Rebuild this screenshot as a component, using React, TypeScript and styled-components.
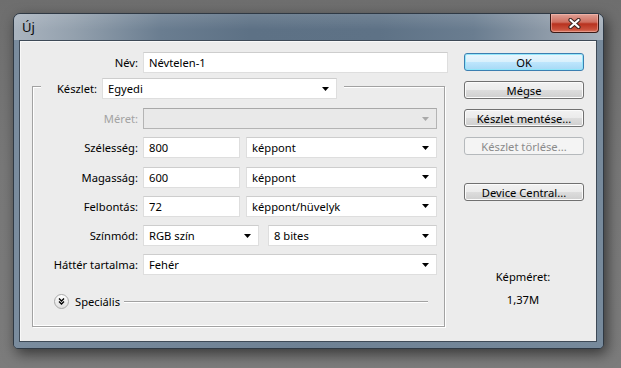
import styled, { createGlobalStyle } from "styled-components"

const GlobalStyle = createGlobalStyle`
    html, body { margin: 0; padding: 0; }
    body { font-family: "Noto Sans", "DejaVu Sans", sans-serif; }
`

interface WidthProps {
    $w?: number;
    $disabled?: boolean;
}

const Desktop = styled.div`
    width: 621px;
    height: 368px;
    box-sizing: border-box;
    padding: 13px 0 0 13px;
    overflow: hidden;
    background: linear-gradient(180deg, #6e6e6e 0%, #787878 45%, #7c7c7c 100%);
`

const Window = styled.div`
    width: 591px;
    height: 336px;
    box-sizing: border-box;
    border: 1px solid #2f3944;
    border-radius: 7px 7px 5px 5px;
    background-color: #6f8295;
    box-shadow: 3px 5px 14px rgba(0, 0, 0, 0.55);
    display: flex;
    flex-direction: column;
    overflow: hidden;
`

const TitleBar = styled.div`
    height: 26px;
    flex: none;
    display: flex;
    justify-content: space-between;
    align-items: flex-start;
    padding: 0 4px 0 8px;
    background:
        linear-gradient(180deg, rgba(255, 255, 255, 0.12) 0%, rgba(255, 255, 255, 0) 60%),
        linear-gradient(90deg, #aab4bf 0%, #94a1ae 10%, #6a7d90 25%, #5d7185 40%, #5e7286 62%, #6a7d90 78%, #8c99a7 90%, #a7b1bc 100%);
`

const Title = styled.span`
    margin-top: 4px;
    font-size: 13px;
    line-height: 18px;
    color: #0a0a0a;
`

const CloseButton = styled.div`
    width: 49px;
    height: 19px;
    box-sizing: border-box;
    border: 1px solid #3a1a16;
    border-top: none;
    border-radius: 0 0 4px 4px;
    background: linear-gradient(180deg, #e0a196 0%, #cf6f60 45%, #b8321f 55%, #c9503b 85%, #d77a63 100%);
    box-shadow: inset 0 0 0 1px rgba(255, 200, 190, 0.45);
    display: flex;
    align-items: center;
    justify-content: center;
`

const Frame = styled.div`
    flex: 1;
    display: flex;
    padding: 0 6px 6px 5px;
    background: linear-gradient(90deg, #7a8c9e 0%, #6e8194 50%, #778a9c 100%);
`

const Client = styled.div`
    flex: 1;
    display: flex;
    border: 1px solid #3e4a57;
    background: #ececec;
    box-shadow: inset 1px 1px 0 #f8f8f8;
    font-size: 11.2px;
    color: #000;
`

const LeftCol = styled.div`
    width: 416px;
    padding: 11px 0 0 12px;
    display: flex;
    flex-direction: column;
`

const RightCol = styled.div`
    width: 120px;
    margin-left: 16px;
    padding-top: 12px;
    display: flex;
    flex-direction: column;
    align-items: stretch;
`

const NameRow = styled.div`
    display: grid;
    grid-template-columns: 107px 305px;
    column-gap: 4px;
    align-items: center;
`

const Label = styled.span<WidthProps>`
    text-align: right;
    padding-right: 1px;
    white-space: nowrap;
    color: ${p => p.$disabled ? '#a3a3a3' : '#000'};
`

const Field = styled.div<WidthProps>`
    height: 21px;
    box-sizing: border-box;
    width: ${p => p.$w ? `${p.$w}px` : 'auto'};
    flex: none;
    display: flex;
    align-items: center;
    padding: 0 7px 0 5px;
    border: 1px solid ${p => p.$disabled ? '#b4b4b4' : '#dedede'};
    border-top-color: ${p => p.$disabled ? '#a8a8a8' : '#cdcdcd'};
    background: ${p => p.$disabled ? '#e9e9e9' : '#fff'};
    white-space: nowrap;
`

const FieldText = styled.span`
    flex: 1;
`

const Group = styled.div`
    margin-top: 13px;
    width: 413px;
    box-sizing: border-box;
    border: 1px solid #a2a2a2;
    border-top: none;
    box-shadow: 1px 1px 0 #fff, inset 1px -1px 0 #fff;
    padding: 0 7px 17px 0;
    display: flex;
    flex-direction: column;
`

const GroupHeader = styled.div`
    margin-top: -8px;
    margin-right: -7px;
    display: flex;
    align-items: flex-start;
    height: 21px;
`

const EdgeLine = styled.div<WidthProps>`
    margin-top: 8px;
    height: 0;
    border-top: 1px solid #a2a2a2;
    border-bottom: 1px solid #fff;
    width: ${p => p.$w ? `${p.$w}px` : 'auto'};
    flex: ${p => p.$w ? 'none' : 1};
`

const LegendLabel = styled.span`
    width: 61px;
    box-sizing: border-box;
    padding-right: 5px;
    text-align: right;
    line-height: 21px;
`

const Rows = styled.div`
    margin-top: 9px;
    display: flex;
    flex-direction: column;
    gap: 8.3px;
`

const Row = styled.div`
    display: grid;
    grid-template-columns: 106px 294px;
    column-gap: 4px;
    align-items: center;
`

const Pair = styled.div`
    display: flex;
    justify-content: space-between;
`

const SpecialRow = styled.div`
    margin-top: 19px;
    padding-left: 21px;
    display: flex;
    align-items: center;
    height: 15px;
`

const SpecialText = styled.span`
    margin-left: 6px;
    margin-right: 4px;
`

const SpecialLine = styled.div`
    flex: 1;
    margin-right: 9px;
    margin-top: 1px;
    border-top: 1px solid #a2a2a2;
    border-bottom: 1px solid #fff;
`

const Button = styled.div<{ $default?: boolean; $disabled?: boolean; $gap?: number }>`
    height: 18px;
    box-sizing: border-box;
    margin-top: ${p => p.$gap ?? 0}px;
    border-radius: 3px;
    display: flex;
    align-items: center;
    justify-content: center;
    white-space: nowrap;
    border: 1px solid ${p => p.$default ? '#3c7fb1' : p.$disabled ? '#b5b9bc' : '#707070'};
    color: ${p => p.$disabled ? '#8b8b8b' : '#000'};
    background: ${p => p.$default
        ? 'linear-gradient(180deg, #eaf6fd 0%, #d9f0fc 50%, #bee6fd 50%, #a7d9f5 100%)'
        : p.$disabled
            ? '#f4f4f4'
            : 'linear-gradient(180deg, #f2f2f2 0%, #ebebeb 50%, #dddddd 50%, #cfcfcf 100%)'};
    box-shadow: inset 0 0 0 1px ${p => p.$default ? 'rgba(140, 230, 250, 0.9)' : p.$disabled ? 'rgba(255,255,255,0)' : '#fbfbfb'};
`

const SizeInfo = styled.div`
    margin-top: 69px;
    display: flex;
    flex-direction: column;
    align-items: center;
    gap: 9px;
    line-height: 14px;
    padding-right: 2px;
`

const Arrow = ({ color = "#000" }: { color?: string }) => (
    <svg width="7" height="4" viewBox="0 0 7 4">
        <path d="M0 0 H7 L3.5 4 Z" fill={color} />
    </svg>
)

const Select = (props: { w?: number; value?: string; disabled?: boolean }) => (
    <Field $w={props.w} $disabled={props.disabled}>
        <FieldText>{props.value}</FieldText>
        <Arrow color={props.disabled ? "#a9a9a9" : "#000"} />
    </Field>
)

const CloseIcon = () => (
    <svg width="13" height="11" viewBox="0 0 13 11">
        <path d="M2.5 2 L10.5 9 M10.5 2 L2.5 9" stroke="#3a2420" strokeWidth="4.2" strokeLinecap="round" />
        <path d="M2.5 2 L10.5 9 M10.5 2 L2.5 9" stroke="#fff" strokeWidth="2.2" strokeLinecap="round" />
    </svg>
)

const ExpandIcon = () => (
    <svg width="15" height="15" viewBox="0 0 15 15">
        <defs>
            <linearGradient id="expandFill" x1="0" y1="0" x2="0" y2="1">
                <stop offset="0" stopColor="#ffffff" />
                <stop offset="1" stopColor="#dedede" />
            </linearGradient>
        </defs>
        <circle cx="7.5" cy="7.5" r="7" fill="url(#expandFill)" stroke="#a7a7a7" />
        <path d="M5 4.5 L7.5 7 L10 4.5 M5 7.5 L7.5 10 L10 7.5" fill="none" stroke="#000" strokeWidth="1.3" />
    </svg>
)

export default function App() {
    return (
        <Desktop>
            <GlobalStyle />
            <Window>
                <TitleBar>
                    <Title>Új</Title>
                    <CloseButton><CloseIcon /></CloseButton>
                </TitleBar>
                <Frame>
                    <Client>
                        <LeftCol>
                            <NameRow>
                                <Label>Név:</Label>
                                <Field><FieldText>Névtelen-1</FieldText></Field>
                            </NameRow>

                            <Group>
                                <GroupHeader>
                                    <EdgeLine $w={8} />
                                    <LegendLabel>Készlet:</LegendLabel>
                                    <Select w={235} value="Egyedi" />
                                    <EdgeLine style={{ marginLeft: 7 }} />
                                </GroupHeader>

                                <Rows>
                                    <Row>
                                        <Label $disabled>Méret:</Label>
                                        <Select disabled />
                                    </Row>
                                    <Row>
                                        <Label>Szélesség:</Label>
                                        <Pair>
                                            <Field $w={97}><FieldText>800</FieldText></Field>
                                            <Select w={191} value="képpont" />
                                        </Pair>
                                    </Row>
                                    <Row>
                                        <Label>Magasság:</Label>
                                        <Pair>
                                            <Field $w={97}><FieldText>600</FieldText></Field>
                                            <Select w={191} value="képpont" />
                                        </Pair>
                                    </Row>
                                    <Row>
                                        <Label>Felbontás:</Label>
                                        <Pair>
                                            <Field $w={97}><FieldText>72</FieldText></Field>
                                            <Select w={191} value="képpont/hüvelyk" />
                                        </Pair>
                                    </Row>
                                    <Row>
                                        <Label>Színmód:</Label>
                                        <Pair>
                                            <Select w={116} value="RGB szín" />
                                            <Select w={169} value="8 bites" />
                                        </Pair>
                                    </Row>
                                    <Row>
                                        <Label>Háttér tartalma:</Label>
                                        <Select value="Fehér" />
                                    </Row>
                                </Rows>

                                <SpecialRow>
                                    <ExpandIcon />
                                    <SpecialText>Speciális</SpecialText>
                                    <SpecialLine />
                                </SpecialRow>
                            </Group>
                        </LeftCol>

                        <RightCol>
                            <Button $default>OK</Button>
                            <Button $gap={10}>Mégse</Button>
                            <Button $gap={10}>Készlet mentése...</Button>
                            <Button $gap={10} $disabled>Készlet törlése...</Button>
                            <Button $gap={28}>Device Central...</Button>
                            <SizeInfo>
                                <span>Képméret:</span>
                                <span>1,37M</span>
                            </SizeInfo>
                        </RightCol>
                    </Client>
                </Frame>
            </Window>
        </Desktop>
    )
}
